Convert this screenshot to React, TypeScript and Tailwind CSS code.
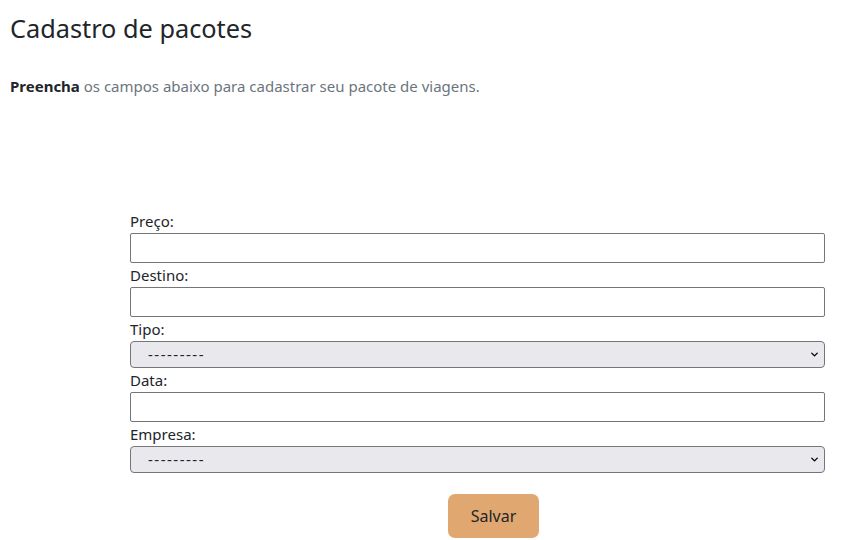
import { ChevronDown } from "lucide-react";

const fields = [
  { label: "Preço:", kind: "input" },
  { label: "Destino:", kind: "input" },
  { label: "Tipo:", kind: "select" },
  { label: "Data:", kind: "input" },
  { label: "Empresa:", kind: "select" },
];

export default function App() {
  return (
    <div className="min-h-[540px] w-[858px] bg-white font-['Noto_Sans',sans-serif] text-[#212529]">
      <div className="px-[10px] pt-[11px]">
        <h1 className="text-[25.3px] leading-[34px] font-normal">Cadastro de pacotes</h1>
        <p className="mt-[30px] text-[15px] leading-[22px] text-[#6c757d]">
          <b className="font-bold text-[#212529]">Preencha</b> os campos abaixo para cadastrar seu pacote de viagens.
        </p>
      </div>

      <form className="mt-[112px] ml-[130px] flex w-[695px] flex-col">
        {fields.map(({ label, kind }) => (
          <div key={label} className="flex flex-col">
            <label className="text-[15px] leading-[24px]">{label}</label>
            {kind === "input" ? (
              <input className="h-[30px] w-full rounded-[2px] border border-[#767676] bg-white px-2" />
            ) : (
              <div className="relative">
                <select className="h-[27px] w-full appearance-none rounded-[4px] border border-[#767676] bg-[#e9e9ed] pl-[17px] text-[15px] tracking-[1.5px]">
                  <option>---------</option>
                </select>
                <ChevronDown
                  className="pointer-events-none absolute right-[5px] top-[8px] h-[11px] w-[11px] text-black"
                  strokeWidth={3}
                />
              </div>
            )}
          </div>
        ))}
        <div className="mt-[21px] flex pl-[318px]">
          <button
            type="button"
            className="h-[44px] w-[91px] rounded-[7px] bg-[#e0a870] text-[16px] text-[#212529]"
          >
            Salvar
          </button>
        </div>
      </form>
    </div>
  );
}
